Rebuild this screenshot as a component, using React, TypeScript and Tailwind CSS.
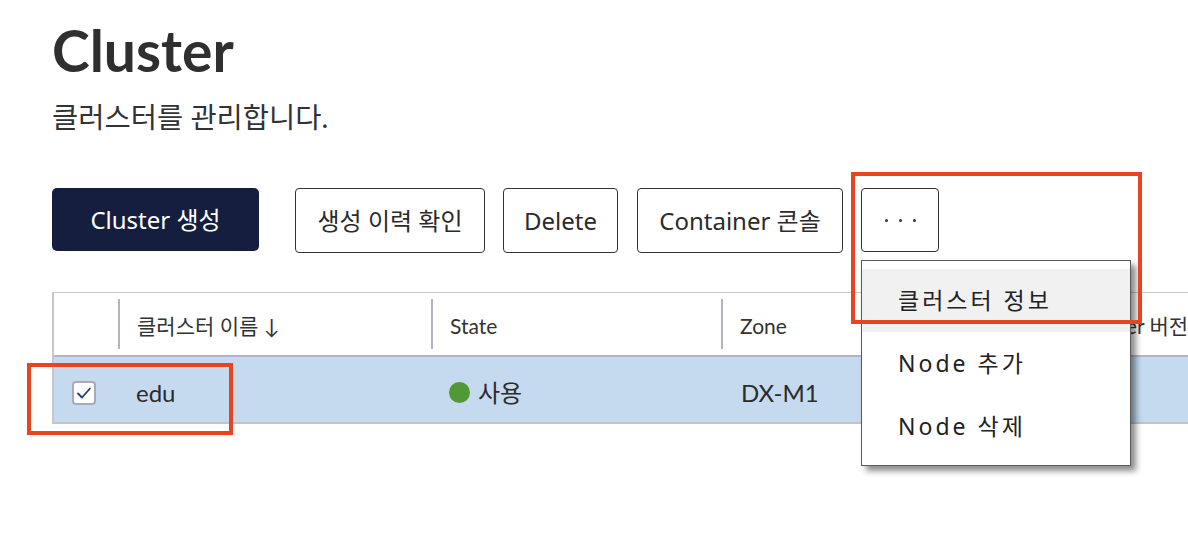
import React from 'react';

const lato = { fontFamily: 'Lato, "Noto Sans CJK KR", sans-serif' };
const noto = { fontFamily: '"Noto Sans", "Noto Sans CJK KR", sans-serif' };

const HeaderCell: React.FC<{ width: string; label?: string; sep?: boolean }> = ({ width, label, sep = true }) => (
  <div className={`${width} h-full flex items-center shrink-0`}>
    {sep && <div className="w-[2px] h-[50px] bg-[#b3b3c3]" />}
    {label && <span className="pl-[17px] pt-[4px] text-[21px] text-[#333] whitespace-nowrap">{label}</span>}
  </div>
);

const CheckBox: React.FC = () => (
  <div className="w-[24px] h-[24px] rounded-[4px] border-2 border-[#a9a9b9] bg-white flex items-center justify-center">
    <svg width="16" height="14" viewBox="0 0 16 14" fill="none">
      <path d="M2 7.5 L6 11.5 L14 2.5" stroke="#1d3c7c" strokeWidth="1.8" strokeLinecap="round" strokeLinejoin="round" />
    </svg>
  </div>
);

const menuItems = ['클러스터 정보', 'Node 추가', 'Node 삭제'];

export default function App() {
  return (
    <div className="relative w-[1188px] h-[542px] overflow-hidden bg-white text-[#2f2f2f]" style={lato}>
      <div className="pl-[52px]">
        <h1 className="mt-[22px] text-[57px] leading-[57px] font-bold text-[#2f2f2f]">Cluster</h1>
        <p className="mt-[23px] text-[28.5px] leading-[31px] text-[#333]">클러스터를 관리합니다.</p>

        {/* action buttons */}
        <div className="mt-[55px] flex items-start" style={noto}>
          <button className="w-[207px] h-[63px] rounded-[5px] bg-[#151e3f] text-white text-[24px]">Cluster 생성</button>
          <button className="ml-[36px] w-[190px] h-[65px] rounded-[4px] border border-[#333] bg-white text-[#2b2b2b] text-[24px]">생성 이력 확인</button>
          <button className="ml-[18px] w-[115px] h-[65px] rounded-[4px] border border-[#333] bg-white text-[#2b2b2b] text-[24px]">Delete</button>
          <button className="ml-[19px] w-[206px] h-[65px] rounded-[4px] border border-[#333] bg-white text-[#2b2b2b] text-[24px]">Container 콘솔</button>
          <div className="relative ml-[18px]">
            <button className="w-[78px] h-[64px] rounded-[4px] border border-[#333] bg-white flex items-center justify-center gap-[11px]">
              <span className="w-[3px] h-[3px] rounded-full bg-[#333]" />
              <span className="w-[3px] h-[3px] rounded-full bg-[#333]" />
              <span className="w-[3px] h-[3px] rounded-full bg-[#333]" />
            </button>
            {/* dropdown menu */}
            <div className="absolute left-0 top-[72px] z-20 w-[270px] pt-[8px] pb-[7px] bg-white border border-[#5a5a5a] shadow-[5px_5px_6px_rgba(0,0,0,0.45)]">
              {menuItems.map((m, i) => (
                <div
                  key={m}
                  className={`h-[63px] flex items-center pl-[36px] text-[23px] tracking-[3px] text-[#222] ${i === 0 ? 'bg-[#f1f1f1]' : ''}`}
                  style={noto}
                >
                  {m}
                </div>
              ))}
            </div>
          </div>
        </div>

        {/* table */}
        <div className="mt-[39px] w-[1300px] border-t border-l-2 border-[#c8c8c8]">
          <div className="h-[64px] flex border-b-2 border-[#b4b4c6]">
            <HeaderCell width="w-[64px]" sep={false} />
            <HeaderCell width="w-[313px]" label="클러스터 이름 ↓" />
            <HeaderCell width="w-[290px]" label="State" />
            <HeaderCell width="w-[338px]" label="Zone" />
            <HeaderCell width="w-[300px]" label="Docker 버전" />
          </div>
          <div className="h-[67px] pt-[6px] flex items-center bg-[#c5daef] border-b-2 border-[#c4c4c4] text-[24px] text-[#2b2b2b]">
            <div className="w-[64px] pl-[18px] shrink-0">
              <CheckBox />
            </div>
            <div className="w-[313px] pl-[18px] shrink-0">edu</div>
            <div className="w-[290px] pl-[18px] shrink-0 flex items-center gap-[8px]">
              <span className="w-[21px] h-[21px] rounded-full bg-[#4f9a36]" />
              <span>사용</span>
            </div>
            <div className="w-[338px] pl-[20px] shrink-0">DX-M1</div>
            <div className="w-[300px] shrink-0" />
          </div>
        </div>
      </div>

      {/* annotation boxes */}
      <div className="absolute left-[851px] top-[172px] w-[291px] h-[152px] border-4 border-[#e8441f] z-30 pointer-events-none" />
      <div className="absolute left-[27px] top-[363px] w-[206px] h-[72px] border-4 border-[#e8441f] z-30 pointer-events-none" />
    </div>
  );
}
